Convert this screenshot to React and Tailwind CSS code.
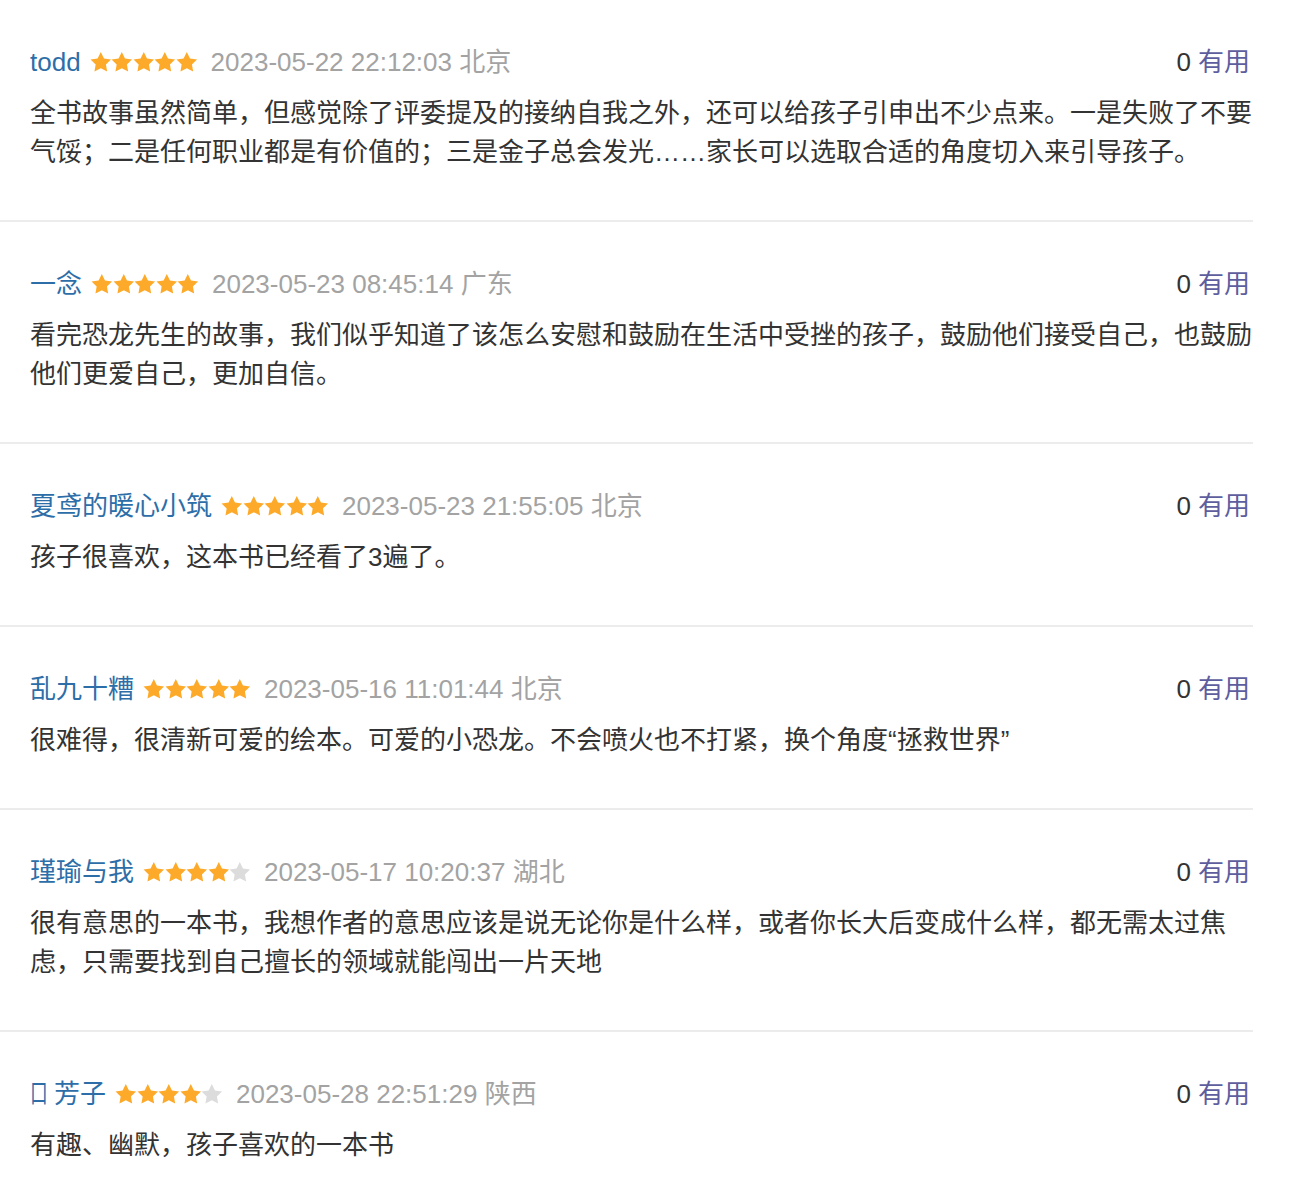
import React from 'react';

const reviews = [
  {
    name: 'todd',
    stars: 5,
    time: '2023-05-22 22:12:03 北京',
    text: '全书故事虽然简单，但感觉除了评委提及的接纳自我之外，还可以给孩子引申出不少点来。一是失败了不要气馁；二是任何职业都是有价值的；三是金子总会发光……家长可以选取合适的角度切入来引导孩子。',
  },
  {
    name: '一念',
    stars: 5,
    time: '2023-05-23 08:45:14 广东',
    text: '看完恐龙先生的故事，我们似乎知道了该怎么安慰和鼓励在生活中受挫的孩子，鼓励他们接受自己，也鼓励他们更爱自己，更加自信。',
  },
  {
    name: '夏鸢的暖心小筑',
    stars: 5,
    time: '2023-05-23 21:55:05 北京',
    text: '孩子很喜欢，这本书已经看了3遍了。',
  },
  {
    name: '乱九十糟',
    stars: 5,
    time: '2023-05-16 11:01:44 北京',
    text: '很难得，很清新可爱的绘本。可爱的小恐龙。不会喷火也不打紧，换个角度“拯救世界”',
  },
  {
    name: '瑾瑜与我',
    stars: 4,
    time: '2023-05-17 10:20:37 湖北',
    text: '很有意思的一本书，我想作者的意思应该是说无论你是什么样，或者你长大后变成什么样，都无需太过焦虑，只需要找到自己擅长的领域就能闯出一片天地',
  },
  {
    name: '芳子',
    prefix: '口',
    stars: 4,
    time: '2023-05-28 22:51:29 陕西',
    text: '有趣、幽默，孩子喜欢的一本书',
  },
];

// chunky full-bleed star so five of them sit edge to edge like the reference
const Star = ({ on }) => (
  <svg width="21.6" height="22" viewBox="0 0 20 20" className="shrink-0">
    <path
      d="M10 0.8L12.94 6.75L19.51 7.71L14.76 12.35L15.88 18.89L10 15.8L4.12 18.89L5.24 12.35L0.49 7.71L7.06 6.75Z"
      fill={on ? '#fdaa2a' : '#dcdcdc'}
    />
  </svg>
);

const Review = ({ r, last }) => (
  <div
    className={
      'pl-[30px] pr-[3px] pt-[42px] ' +
      (last ? 'pb-[20px]' : 'pb-[48px] border-b-2 border-[#ececec]')
    }
  >
    <div className="flex items-center justify-between h-[40px] leading-[40px] text-[26px]">
      <div className="flex items-center">
        <span className="flex items-center text-[#2d6ea8]">
          {/* narrow box glyph in front of the nickname */}
          {r.prefix && (
            <span className="inline-block w-[17px] mr-[7px] scale-x-[0.68] origin-left">
              {r.prefix}
            </span>
          )}
          {r.name}
        </span>
        <div className="flex items-center ml-[9px]">
          {[1, 2, 3, 4, 5].map((i) => (
            <Star key={i} on={i <= r.stars} />
          ))}
        </div>
        <span className="ml-[13px] text-[#a3a3a3]">{r.time}</span>
      </div>
      <div className="flex items-center">
        <span className="text-[#333333]">0</span>
        <span className="ml-[7px] text-[#5e5e9e]">有用</span>
      </div>
    </div>
    <p className="mt-[12px] mr-[-6px] text-[26px] leading-[39px] text-[#333333]">{r.text}</p>
  </div>
);

export default function App() {
  return (
    <div
      className="w-[1253px] bg-white min-h-[1202px]"
      style={{ fontFamily: '"Liberation Sans", "Noto Sans CJK SC", sans-serif' }}
    >
      {reviews.map((r, i) => (
        <Review key={i} r={r} last={i === reviews.length - 1} />
      ))}
    </div>
  );
}
